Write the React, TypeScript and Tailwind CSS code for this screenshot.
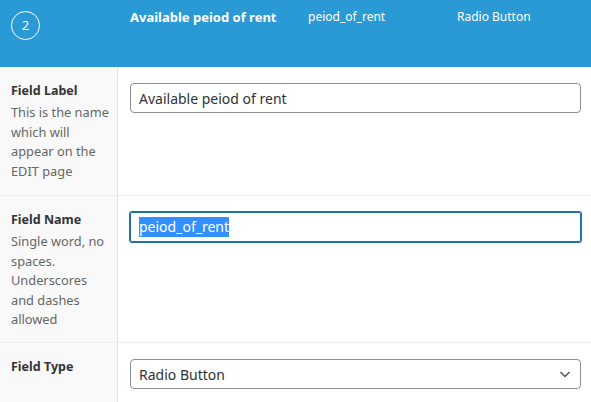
import React from "react";

const font = { fontFamily: '"Noto Sans", "Open Sans", sans-serif' };

function Row({
  title,
  desc,
  children,
  height,
}: {
  title: string;
  desc?: string[];
  children: React.ReactNode;
  height: string;
}) {
  return (
    <div className={`flex border-b border-[#eeeeee] ${height}`}>
      <div className="w-[118px] shrink-0 bg-[#f9f9f9] border-r border-[#e1e1e1] pl-[11px] pt-[15px]">
        <div className="text-[12.5px] font-bold text-[#333333] leading-[18px]">{title}</div>
        {desc && (
          <div className="mt-[3px] text-[12.8px] text-[#666666] leading-[19.5px] whitespace-nowrap">
            {desc.map((l) => (
              <div key={l}>{l}</div>
            ))}
          </div>
        )}
      </div>
      <div className="flex-1 pl-[12px] pr-[10px] pt-[16px]">{children}</div>
    </div>
  );
}

export default function App() {
  return (
    <div className="w-[591px] h-[402px] overflow-hidden bg-white" style={font}>
      <div className="h-[67px] bg-[#2a9ad7] flex items-start text-white">
        <div className="w-[130px] shrink-0 pl-[11px] pt-[11px]">
          <div className="w-[29px] h-[29px] rounded-full border border-white flex items-center justify-center text-[13px]">
            2
          </div>
        </div>
        <div className="w-[178px] shrink-0 pt-[8px] text-[13px] font-bold">Available peiod of rent</div>
        <div className="w-[149px] shrink-0 pt-[8px] text-[12px]">peiod_of_rent</div>
        <div className="pt-[8px] text-[12px]">Radio Button</div>
      </div>

      <Row
        title="Field Label"
        desc={["This is the name", "which will", "appear on the", "EDIT page"]}
        height="h-[129px]"
      >
        <div className="h-[30px] rounded-[4px] border border-[#8c8f94] px-[8px] flex items-center text-[14px] text-[#2c3338]">
          Available peiod of rent
        </div>
      </Row>

      <Row
        title="Field Name"
        desc={["Single word, no", "spaces.", "Underscores", "and dashes", "allowed"]}
        height="h-[147px]"
      >
        <div className="h-[30px] rounded-[2px] border border-[#2271b1] shadow-[0_0_0_1px_#2271b1] px-[8px] flex items-center text-[14px]">
          <span className="bg-[#3390ff] text-white leading-[20px]">peiod_of_rent</span>
        </div>
      </Row>

      <Row title="Field Type" height="h-[60px]">
        <div className="h-[30px] rounded-[4px] border border-[#8c8f94] pl-[8px] pr-[8px] flex items-center justify-between text-[14px] text-[#2c3338]">
          <span>Radio Button</span>
          <svg width="12" height="12" viewBox="0 0 12 12" fill="none" className="mr-[1px]">
            <path d="M1.5 4l4.5 4.5L10.5 4" stroke="#50575e" strokeWidth="1.5" />
          </svg>
        </div>
      </Row>
    </div>
  );
}
